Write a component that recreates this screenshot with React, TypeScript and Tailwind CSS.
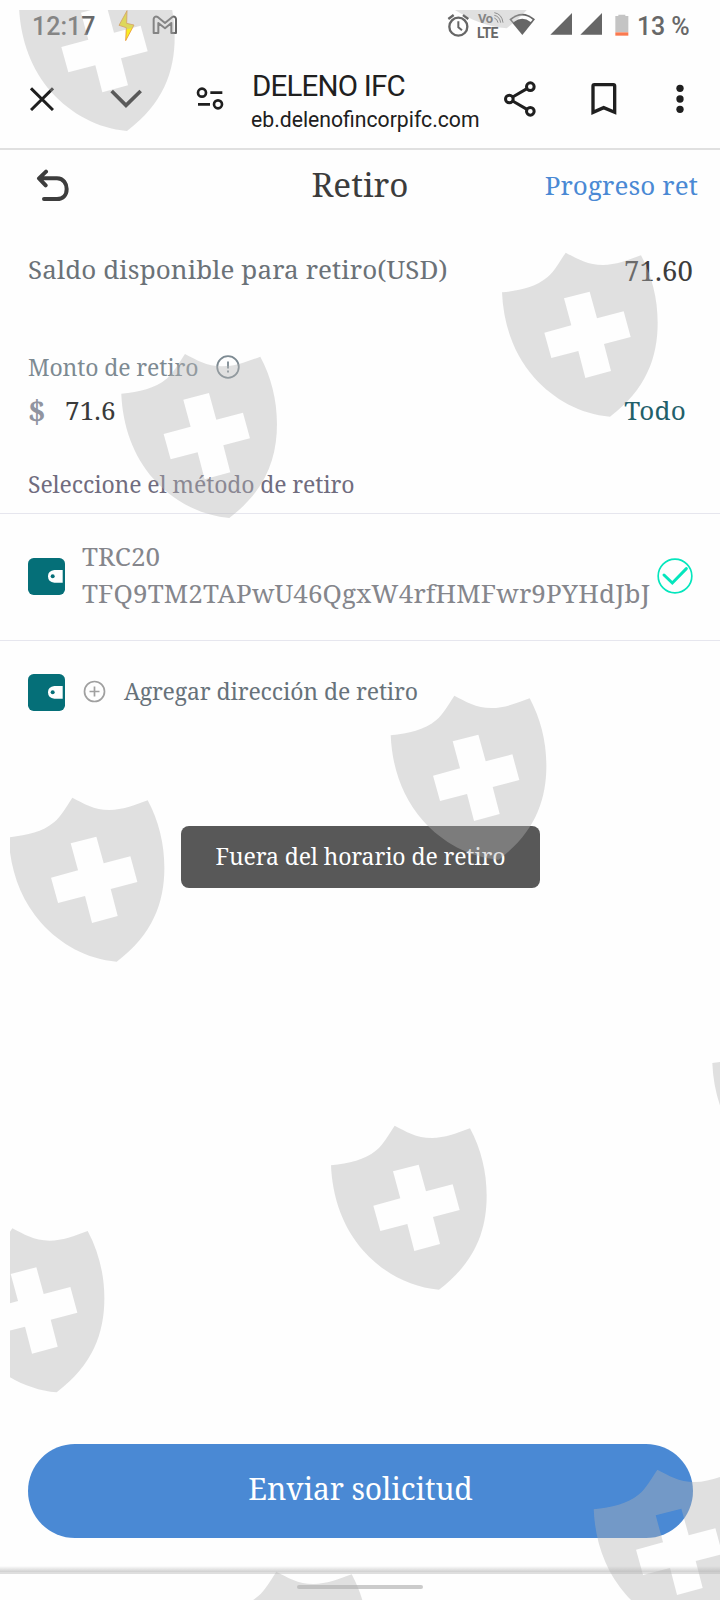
const serif = "font-['Noto_Serif','DejaVu_Serif_Condensed','DejaVu_Serif',serif]";

const shields = [
  { x: 19, y: -33 },
  { x: 398.7, y: -135.7 },
  { x: 502, y: 252.7 },
  { x: 121.3, y: 354 },
  { x: 390.7, y: 695.7 },
  { x: 8.7, y: 797.7 },
  { x: 712.3, y: 1023.3 },
  { x: 331, y: 1125.7 },
  { x: -51.3, y: 1228.3 },
  { x: 593.7, y: 1469.7 },
  { x: 212.7, y: 1571.7 },
];

function Watermark() {
  return (
    <svg className="pointer-events-none absolute inset-0" width="720" height="1600" viewBox="0 0 720 1600">
      <defs>
        <clipPath id="page-inset">
          <rect x="10" y="10" width="710" height="1590" />
        </clipPath>
      </defs>
      <g clipPath="url(#page-inset)" fill="#b2b2b2" fillOpacity="0.395" fillRule="evenodd">
        {shields.map((s, i) => (
          <path
            key={i}
            transform={`translate(${s.x} ${s.y}) scale(0.33333)`}
            d="M0 119C55 113 100 104 136 74C158 55 172 28 191 0C225 17 255 37 303 37C340 37 378 23 417 8C450 70 467 138 467 210C467 315 432 410 324 492C235 484 155 440 97 375C35 305 4 215 0 119ZM186 137L263 117L285 197L365 176L386 253L306 274L327 355L250 376L229 295L148 316L127 240L208 218Z"
          />
        ))}
      </g>
    </svg>
  );
}

function StatusBar() {
  return (
    <div className="flex h-[52px] items-center text-[#686868] font-[Roboto,sans-serif] text-[25px] font-medium">
      <span className="ml-[32px] w-[86px] pt-[2px]">12:17</span>
      <svg width="17" height="32" viewBox="353 29 51 96">
        <path d="M380 31L356 75L378 82L376 121L401 74L379 69Z" fill="#f9ee22" stroke="#e8963c" strokeWidth="2.5" />
      </svg>
      <svg className="ml-[17px] mb-[2px]" width="26" height="20" viewBox="457 45 78 60">
        <path d="M462 99H476V69L496 85L515 69V99H529V57Q527 47 518 51L496 69L474 51Q464 47 462 57Z" fill="none" stroke="#666" strokeWidth="6" strokeLinejoin="round" />
      </svg>
      <svg className="ml-[269px] mb-[1px]" width="23" height="24" viewBox="260 40 69 72" fill="none" stroke="#666">
        <circle cx="294" cy="78" r="27" strokeWidth="7" />
        <path d="M294 62V80L305 89" strokeWidth="6" />
        <path d="M264 55L280 43M324 55L308 43" strokeWidth="7" />
      </svg>
      <div className="ml-[7px] flex h-[28px] w-[28px] flex-col text-[13px] leading-[14px] font-bold">
        <span className="flex">
          <span className="pl-[1px] tracking-[-0.5px]">Vo</span>
          <svg className="ml-[1px]" width="11" height="12" viewBox="404 40 33 36" fill="none" stroke="#777" strokeWidth="3">
            <path d="M405 58Q414 61 416 72M405 50Q421 53 424 72M405 42Q428 46 431 72" />
          </svg>
        </span>
        <span className="text-[14px] leading-[14px] tracking-[-0.6px]">LTE</span>
      </div>
      <svg className="ml-[4px] mb-[4px]" width="27" height="24" viewBox="447 36 81 72">
        <path d="M487 105L448 58Q487 24 525 58Z" fill="#666" />
        <path d="M455 59L461 66Q487 46 512 66L518 59Q487 34 455 59Z" fill="#fefefe" />
      </svg>
      <svg className="ml-[14px] mb-[4px]" width="53" height="24" viewBox="570 36 159 72" fill="#666">
        <path d="M571 104L636 39V104ZM661 104L726 39V104Z" />
      </svg>
      <svg className="ml-[12px] mb-[3px]" width="14" height="22" viewBox="764 40 42 66">
        <path d="M774 42H795V46H804V95H765V46H774Z" fill="#c4c4c4" />
        <path d="M765 95H804V105H765Z" fill="#fa7a50" />
      </svg>
      <span className="ml-[8px] pt-[2px] tracking-[-0.1px]">13 %</span>
    </div>
  );
}

function BrowserBar() {
  return (
    <div className="flex h-[98px] items-center border-b-2 border-[#e0e0e0] pb-[2px] text-[#202020] font-[Roboto,sans-serif]">
      <svg className="ml-[30px]" width="24" height="24" viewBox="90 260 72 72" fill="none" stroke="#1f1f1f" strokeWidth="9">
        <path d="M93 264L159 329M159 264L93 329" />
      </svg>
      <svg className="ml-[56px]" width="32" height="20" viewBox="330 268 96 60" fill="none" stroke="#1f1f1f" strokeWidth="11">
        <path d="M335 274L378 317L422 274" />
      </svg>
      <svg className="ml-[54px]" width="28" height="24" viewBox="588 262 84 72" fill="none" stroke="#1f1f1f" strokeWidth="8">
        <circle cx="606" cy="279" r="12" />
        <circle cx="654" cy="314" r="12" />
        <path d="M631 279H667M594 314H630" />
      </svg>
      <div className="ml-[27px] flex w-[232px] flex-col pt-[6px] whitespace-nowrap">
        <span className="pl-[1px] text-[29.5px] leading-[36px] tracking-[-0.8px]">DELENO IFC</span>
        <span className="text-[21.2px] leading-[32px]">eb.delenofincorpifc.com</span>
      </div>
      <svg className="ml-[21px]" width="34" height="36" viewBox="432 243 102 108" fill="none" stroke="#1f1f1f" strokeWidth="9">
        <circle cx="448" cy="297" r="11.5" />
        <circle cx="511" cy="260" r="11.5" />
        <circle cx="511" cy="334" r="11.5" />
        <path d="M458 291L501 266M458 303L501 328" />
      </svg>
      <svg className="ml-[53px]" width="26" height="32" viewBox="694 249 78 96" fill="none" stroke="#1f1f1f" strokeWidth="10">
        <path d="M700 337V258Q700 254 704 254H761Q765 254 765 258V337L732 323Z" />
      </svg>
      <svg className="ml-[58px]" width="10" height="30" viewBox="945 252 30 90" fill="#1f1f1f">
        <circle cx="960" cy="265" r="11" />
        <circle cx="960" cy="297" r="11" />
        <circle cx="960" cy="328" r="11" />
      </svg>
    </div>
  );
}

function WalletIcon() {
  return (
    <svg className="shrink-0" width="37" height="37" viewBox="0 0 111 111">
      <rect width="111" height="111" rx="17" fill="#056f78" />
      <path d="M104 36H79Q60 38 60 55Q60 72 79 74H104Z" fill="#fefefe" />
      <circle cx="74" cy="55" r="6" fill="#056f78" />
    </svg>
  );
}

export default function App() {
  return (
    <div className={`relative flex h-[1600px] w-[720px] flex-col overflow-hidden bg-[#fefefe] whitespace-nowrap ${serif}`}>
      <StatusBar />
      <BrowserBar />

      <header className="grid h-[70px] grid-cols-3 items-center">
        <svg className="mt-[2px] ml-[36px]" width="34" height="34" viewBox="109 505 102 102" fill="none" stroke="#3d3d3d" strokeWidth="12" strokeLinecap="round" strokeLinejoin="round">
          <path d="M139 513L118 533L138 554M119 533H172C192 533 201 550 201 565C201 583 190 595 172 595H133" />
        </svg>
        <h1 className="text-center text-[33.3px] text-[#3c3c3c]">Retiro</h1>
        <span className="pr-[22px] text-right text-[26px] tracking-[0.12px] text-[#4a89d4]">Progreso ret</span>
      </header>

      <div className="flex h-[100px] items-center justify-between pr-[27px] pl-[28px]">
        <span className="pb-[2px] text-[26px] tracking-[0.12px] text-[#6b7278]">Saldo disponible para retiro(USD)</span>
        <span className="pt-[2px] text-[27.5px] tracking-[0.12px] text-[#3c3c3c]">71.60</span>
      </div>

      <div className="mt-[26px] flex h-[42px] items-center pl-[28px]">
        <span className="text-[23px] tracking-[-0.12px] text-[#7d8a92]">Monto de retiro</span>
        <svg className="ml-[18px]" width="24" height="24" viewBox="0 0 24 24" fill="none" stroke="#7d8a92" strokeWidth="1.8">
          <circle cx="12" cy="12" r="10.8" />
          <path d="M12 6.5V13.5M12 15.5V17.5" />
        </svg>
      </div>
      <div className="flex h-[46px] items-center pr-[34px] pb-[1px] pl-[28px]">
        <span className="w-[37px] text-[31px] leading-[40px] font-bold text-[#9194a0]">$</span>
        <span className="text-[26px] tracking-[0.12px] text-[#3a3a3a]">71.6</span>
        <span className="ml-auto text-[26px] tracking-[0.3px] text-[#22606a]">Todo</span>
      </div>

      <div className="flex h-[80px] items-end border-b border-[#e6e6ee] pb-[12px] pl-[28px] text-[23px] tracking-[-0.12px] text-[#706c7e]">
        Seleccione el método de retiro
      </div>

      <div className="flex h-[127px] items-center border-b border-[#e6e6ee] pr-[27px] pb-[2px] pl-[28px]">
        <WalletIcon />
        <div className="ml-[17px] pb-[2px] text-[26px] leading-[37px] tracking-[0.15px] text-[#85868c]">
          <div>TRC20</div>
          <div>TFQ9TM2TAPwU46QgxW4rfHMFwr9PYHdJbJ</div>
        </div>
        <svg className="ml-auto shrink-0" width="36" height="36" viewBox="0 0 108 108" fill="none" stroke="#04e6bd">
          <circle cx="54" cy="54" r="50.5" strokeWidth="5" />
          <path d="M21 51L46 75L88 32" strokeWidth="9" strokeLinecap="round" />
        </svg>
      </div>

      <div className="mt-[30px] flex h-[42px] items-center pl-[28px]">
        <WalletIcon />
        <svg className="ml-[18px] mb-[2px]" width="23" height="23" viewBox="0 0 23 23" fill="none" stroke="#a0a0a0" strokeWidth="1.7">
          <circle cx="11.5" cy="11.5" r="10" />
          <path d="M11.5 6.5V16.5M6.5 11.5H16.5" />
        </svg>
        <span className="ml-[18px] pb-[2px] text-[23px] tracking-[-0.12px] text-[#67727a]">Agregar dirección de retiro</span>
      </div>

      <button className="mx-[28px] mt-auto flex h-[94px] w-[665px] items-center justify-center rounded-full bg-[#4a89d4] pb-[6px] text-[30px] tracking-[-0.1px] text-white">
        Enviar solicitud
      </button>
      <div className="mt-[28px] h-[8px] border-b-2 border-[#dedede] bg-linear-to-b from-[#fefefe] to-[#cfcfcf]" />
      <div className="flex h-[26px] items-center justify-center">
        <div className="h-[4px] w-[126px] rounded-full bg-[#cbcbcb]" />
      </div>

      <div className="absolute top-[826px] left-[181px] flex h-[62px] w-[359px] items-center justify-center rounded-lg bg-[#585858] pb-[2px] text-[23px] tracking-[-0.12px] text-white">
        Fuera del horario de retiro
      </div>

      <Watermark />
    </div>
  );
}
